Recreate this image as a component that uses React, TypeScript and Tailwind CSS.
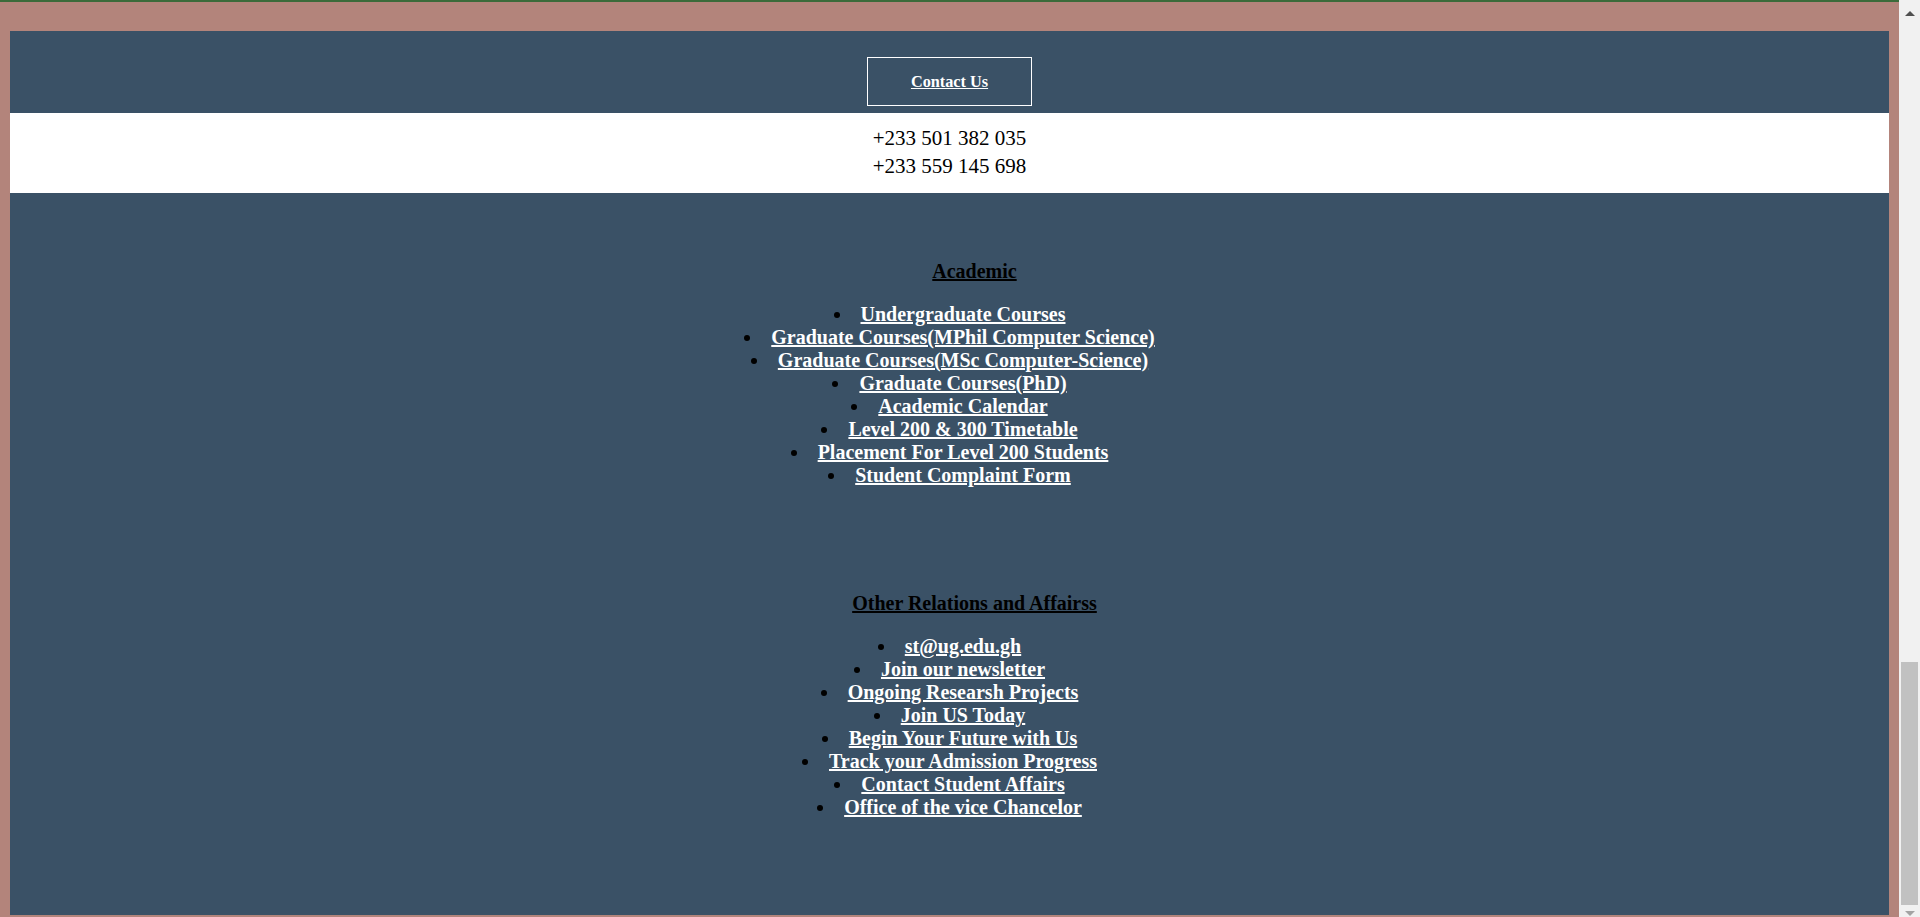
const academicLinks = [
  "Undergraduate Courses",
  "Graduate Courses(MPhil Computer Science)",
  "Graduate Courses(MSc Computer-Science)",
  "Graduate Courses(PhD)",
  "Academic Calendar",
  "Level 200 & 300 Timetable",
  "Placement For Level 200 Students",
  "Student Complaint Form",
];

const otherLinks = [
  "st@ug.edu.gh",
  "Join our newsletter",
  "Ongoing Researsh Projects",
  "Join US Today",
  "Begin Your Future with Us",
  "Track your Admission Progress",
  "Contact Student Affairs",
  "Office of the vice Chancelor",
];

function LinkList({ title, links }: { title: string; links: string[] }) {
  return (
    <div className="flex flex-col items-center">
      {/* heading sits a bit right of centre, like the original */}
      <h3 className="pl-[50px] text-[20px] leading-[23px] font-bold underline text-black">{title}</h3>
      <ul className="mt-[20px] list-disc list-inside text-center text-[20px] leading-[23px] font-bold text-black">
        {links.map((link) => (
          <li key={link}>
            <a href="#" className="text-white underline">
              {link}
            </a>
          </li>
        ))}
      </ul>
    </div>
  );
}

export default function App() {
  return (
    <div
      className="flex h-[917px] w-full overflow-hidden bg-[#f1f1f1]"
      style={{ fontFamily: '"Liberation Serif", "Times New Roman", serif' }}
    >
      <div className="flex flex-1 flex-col bg-[#b3847b]">
        <div className="h-[2px] bg-[#3b6b3a]" />
        <div className="flex flex-1 flex-col px-[10px] pt-[29px] pb-[2px]">
          <footer className="flex flex-1 flex-col items-center bg-[#3a5166]">
            {/* contact */}
            <div className="pt-[26px] pb-[7px]">
              <div className="flex h-[49px] w-[165px] items-center justify-center border border-white pt-[2px]">
                <a href="#" className="text-[16.25px] font-bold text-white underline">
                  Contact Us
                </a>
              </div>
            </div>
            <div className="self-stretch bg-white pt-[11px] pb-[13px] text-center text-[21px] leading-[28px] text-black">
              <p>+233 501 382 035</p>
              <p>+233 559 145 698</p>
            </div>

            <div className="mt-[67px]">
              <LinkList title="Academic" links={academicLinks} />
            </div>
            <div className="mt-[105px]">
              <LinkList title="Other Relations and Affairss" links={otherLinks} />
            </div>
          </footer>
        </div>
      </div>

      {/* scrollbar */}
      <div className="flex w-[21px] flex-col bg-[#f1f1f1]">
        <div className="flex h-[26px] justify-center pt-[11px]">
          <div className="h-0 w-0 border-x-[5px] border-b-[5px] border-x-transparent border-b-[#505050]" />
        </div>
        <div className="flex flex-1 flex-col justify-end">
          <div className="ml-[2px] h-[243px] w-[17px] bg-[#c1c1c1]" />
        </div>
        <div className="flex h-[12px] justify-center pt-[6px]">
          <div className="h-0 w-0 border-x-[5px] border-t-[5px] border-x-transparent border-t-[#a3a3a3]" />
        </div>
      </div>
    </div>
  );
}
